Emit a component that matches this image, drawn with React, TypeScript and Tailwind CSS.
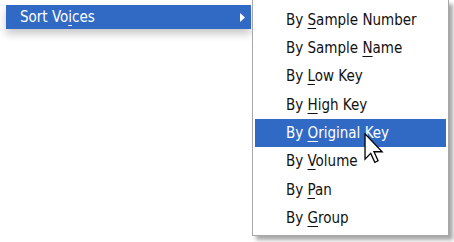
import React from "react";

const items: { pre: string; key: string; post: string }[] = [
  { pre: "By ", key: "S", post: "ample Number" },
  { pre: "By Sample ", key: "N", post: "ame" },
  { pre: "By ", key: "L", post: "ow Key" },
  { pre: "By ", key: "H", post: "igh Key" },
  { pre: "By ", key: "O", post: "riginal Key" },
  { pre: "By ", key: "V", post: "olume" },
  { pre: "By ", key: "P", post: "an" },
  { pre: "By ", key: "G", post: "roup" },
];

function Cursor() {
  return (
    <svg
      className="absolute left-[364px] top-[133px]"
      width="20"
      height="31"
      viewBox="0 0 12 19"
    >
      <path
        d="M0.5 0.5 L0.5 16 L4 12.5 L6.5 18 L8.5 17 L6 11.5 L11 11.5 Z"
        fill="#fff"
        stroke="#000"
        strokeWidth="0.8"
        strokeLinejoin="miter"
      />
    </svg>
  );
}

export default function App() {
  return (
    <div
      className="relative w-[454px] h-[242px] bg-white overflow-hidden"
      style={{ fontFamily: '"DejaVu Sans Condensed", "Liberation Sans", sans-serif' }}
    >
      <div className="flex items-start">
        <div className="ml-[6px] mt-[5px] w-[245px] h-[24px] bg-[#316ac5] text-white text-[15px] flex items-center justify-between pl-[14px] pr-[5px] shadow-[0_5px_8px_rgba(0,0,0,0.22)]">
          <span>
            Sort Vo<span className="underline underline-offset-[3px]">i</span>ces
          </span>
          <svg width="6" height="9" viewBox="0 0 6 9">
            <path d="M0 0 L5 4.5 L0 9 Z" fill="#fff" />
          </svg>
        </div>
        <div className="ml-[1px] w-[197px] bg-white border-x border-b border-[#a7a7a7] pt-[6px] pb-[3px] px-[2px] shadow-[4px_4px_4px_rgba(0,0,0,0.35)]">
          {items.map((it, i) => (
            <div
              key={i}
              className={
                "h-[28.3px] flex items-center pl-[31px] text-[15px] " +
                (i === 4 ? "bg-[#316ac5] text-white" : "text-[#111]")
              }
            >
              <span>
                {it.pre}
                <span className="underline underline-offset-[3px]">{it.key}</span>
                {it.post}
              </span>
            </div>
          ))}
        </div>
      </div>
      <Cursor />
    </div>
  );
}
